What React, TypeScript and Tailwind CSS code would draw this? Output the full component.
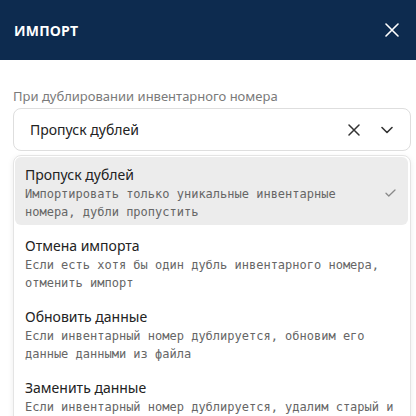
import React from "react";

const items = [
  {
    title: "Пропуск дублей",
    desc: "Импортировать только уникальные инвентарные номера, дубли пропустить",
    selected: true,
  },
  {
    title: "Отмена импорта",
    desc: "Если есть хотя бы один дубль инвентарного номера, отменить импорт",
  },
  {
    title: "Обновить данные",
    desc: "Если инвентарный номер дублируется, обновим его данные данными из файла",
  },
  {
    title: "Заменить данные",
    desc: "Если инвентарный номер дублируется, удалим старый и создадим новый",
  },
];

export default function App() {
  return (
    <div className="w-[416px] h-[416px] overflow-hidden bg-white flex flex-col" style={{ fontFamily: '"Noto Sans", sans-serif' }}>
      <div className="h-[60px] shrink-0 bg-[#0d2b4f] flex items-center justify-between pl-[14px] pr-[17px]">
        <div className="text-white font-bold text-[14px] tracking-[0.2px]" style={{ fontFamily: '"Open Sans", sans-serif' }}>
          ИМПОРТ
        </div>
        <svg width="14" height="14" viewBox="0 0 14 14" fill="none" stroke="#ffffff" strokeWidth="1.6" strokeLinecap="round">
          <path d="M1 1L13 13M13 1L1 13" />
        </svg>
      </div>
      <div className="pl-[13px] pr-[5px] pt-[27px] flex flex-col">
        <div className="text-[13px] text-[#7a7a7a] leading-[18px]">При дублировании инвентарного номера</div>
        <div className="mt-[3px] h-[43px] border border-[#dedede] rounded-[8px] flex items-center pl-[16px] pr-[17px]">
          <div className="flex-1 text-[14px] text-[#222]">Пропуск дублей</div>
          <svg width="12" height="12" viewBox="0 0 12 12" fill="none" stroke="#333" strokeWidth="1.5" strokeLinecap="round">
            <path d="M1 1L11 11M11 1L1 11" />
          </svg>
          <svg className="ml-[21px]" width="12" height="8" viewBox="0 0 12 8" fill="none" stroke="#333" strokeWidth="1.6" strokeLinecap="round" strokeLinejoin="round">
            <path d="M1 1.5L6 6.5L11 1.5" />
          </svg>
        </div>
        <div className="mt-[4px] border border-[#e4e4e4] rounded-[8px] shadow-[0_2px_6px_rgba(0,0,0,0.08)] pt-[1px] pl-[1px] pr-[2px] bg-white">
          {items.map((it, i) => (
            <div
              key={i}
              className={
                "flex items-center pl-[10px] pr-[12px] pt-[8px] pb-[4px] mb-[3px] rounded-[6px] " +
                (it.selected ? "bg-[#ececec]" : "")
              }
            >
              <div className="flex-1">
                <div className="text-[14px] leading-[20px] text-[#222]">{it.title}</div>
                <div
                  className="text-[12px] leading-[18px] text-[#666]"
                  style={{ fontFamily: '"DejaVu Sans Mono", monospace' }}
                >
                  {it.desc}
                </div>
              </div>
              {it.selected && (
                <svg className="ml-[12px]" width="11" height="8" viewBox="0 0 11 8" fill="none" stroke="#8a8a8a" strokeWidth="1.3" strokeLinecap="round" strokeLinejoin="round">
                  <path d="M1 4.2L3.8 7L10 1" />
                </svg>
              )}
            </div>
          ))}
        </div>
      </div>
    </div>
  );
}
